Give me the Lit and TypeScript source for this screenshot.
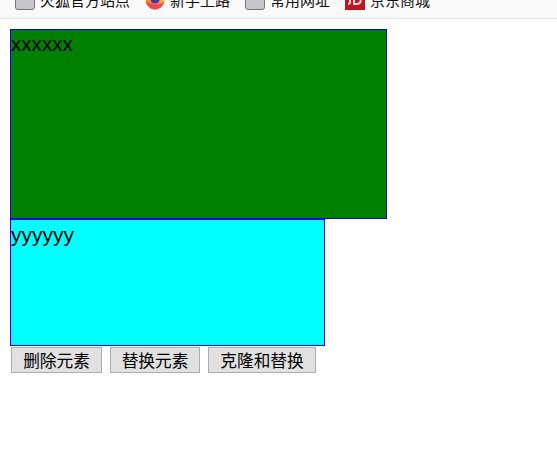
import { LitElement, html, css } from "lit";
import { customElement } from "lit/decorators.js";

@customElement("app-root")
export class AppRoot extends LitElement {
  static styles = css`
    :host { display: block; width: 557px; height: 458px; overflow: hidden; background: #fff;
      font-family: "Liberation Sans", "Noto Sans CJK SC", sans-serif; color: #000; }
    .bar { height: 18px; border-bottom: 1px solid #e3e3e3; background: #f9f9f9; overflow: hidden;
      display: flex; align-items: flex-end; padding-left: 15px; box-sizing: content-box; }
    .item { display: flex; align-items: center; gap: 5px; height: 20px; margin-right: 15px; flex: none;
      font-size: 15px; line-height: 20px; color: #111; padding-bottom: 8px; white-space: nowrap; }
    .item span { padding-top: 2px; }
    .item svg { display: block; flex: none; width: 20px; height: 20px; }
    .content { padding: 10px 0 0 10px; }
    .box { box-sizing: border-box; border: 1px solid #00f; font-size: 21px; }
    .g { width: 377px; height: 190px; background: #008000; font-size: 20.6px; line-height: 27px; }
    .c { width: 315px; height: 127px; background: #0ff; line-height: 29px; }
    .btns { display: flex; padding: 1px 0 0 1px; gap: 8px; }
    button { box-sizing: border-box; height: 26px; margin: 0; padding: 0; border: 1px solid #adadad;
      background: #e1e1e1; font: 16.7px "Noto Sans CJK SC", sans-serif; color: #000; border-radius: 0; }
    .b1 { width: 91px; } .b2 { width: 90px; } .b3 { width: 108px; }
  `;

  private page() {
    return html`<svg viewBox="0 0 20 20"><rect x="0.5" y="1" width="19" height="18.500" rx="2.500" fill="#c8c8cc" stroke="#77777a" stroke-width="1"/></svg>`;
  }

  render() {
    return html`
      <div class="bar">
        <div class="item">${this.page()}<span>火狐官方站点</span></div>
        <div class="item">
          <svg viewBox="0 0 20 20">
            <circle cx="10" cy="10" r="9.500" fill="#ff8a1f"/>
            <path d="M4 2h13l2 8c0 3-2 6-5 8 2-3 2-6 0-8L8 8z" fill="#ffb52e"/>
            <circle cx="10" cy="9" r="4.500" fill="#4a32b0"/>
            <path d="M1 11c1 5 5 8.500 9 8.500s8-3 9-8c-3 4-12 4-18-.5z" fill="#f0455a"/>
          </svg>
          <span>新手上路</span>
        </div>
        <div class="item">${this.page()}<span>常用网址</span></div>
        <div class="item">
          <svg viewBox="0 0 20 20">
            <rect width="20" height="20" fill="#c0141f"/>
            <path d="M5 3v9q0 2-2 2M9 3h3q4 0 4 5.500T12 14H9z" fill="none" stroke="#f6d8da" stroke-width="2"/>
          </svg>
          <span>京东商城</span>
        </div>
      </div>
      <div class="content">
        <div class="box g">xxxxxx</div>
        <div class="box c">yyyyyy</div>
        <div class="btns">
          <button class="b1">删除元素</button>
          <button class="b2">替换元素</button>
          <button class="b3">克隆和替换</button>
        </div>
      </div>
    `;
  }
}
